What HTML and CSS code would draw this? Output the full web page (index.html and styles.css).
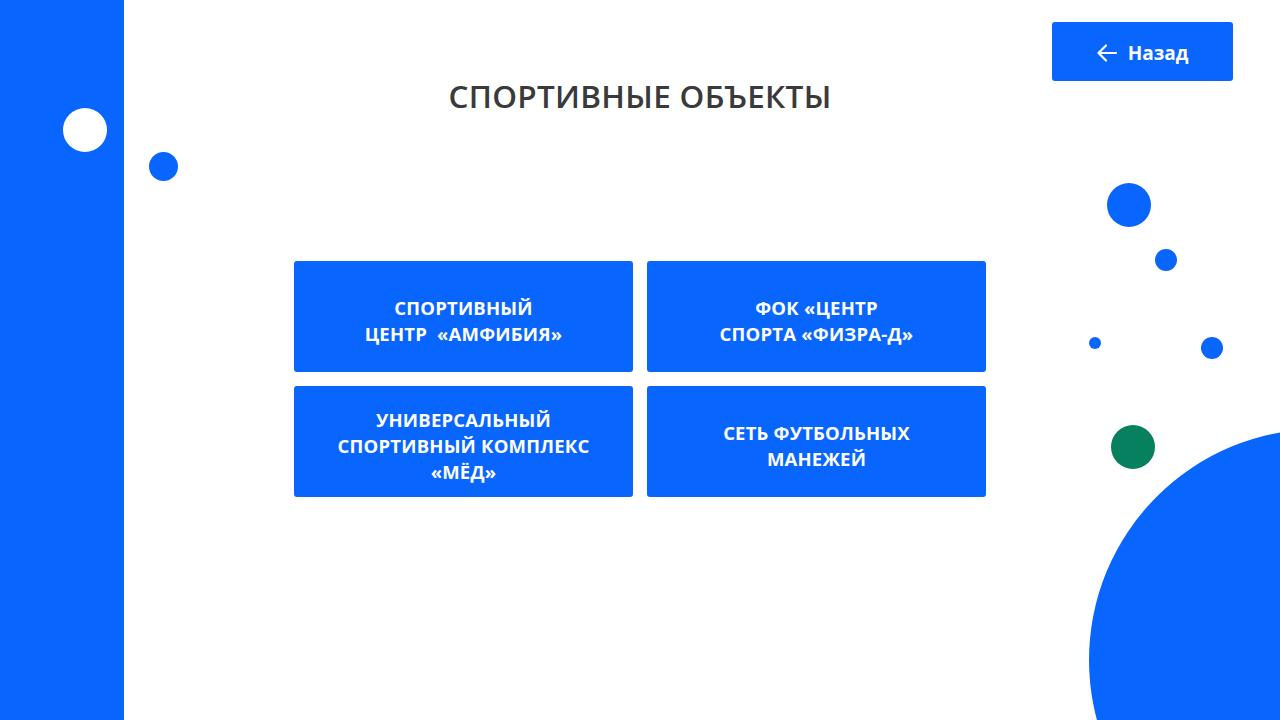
FILE: index.html
```html
<!DOCTYPE html>
<html lang="ru">
<head>
<meta charset="utf-8">
<title>Спортивные объекты</title>
<link rel="stylesheet" href="styles.css">
</head>
<body>
<div class="page">
  <div class="side"></div>
  <span class="dot dot-white"></span>
  <span class="dot dot-left"></span>
  <span class="dot dot-r1"></span>
  <span class="dot dot-r2"></span>
  <span class="dot dot-r3"></span>
  <span class="dot dot-r4"></span>
  <span class="dot dot-green"></span>
  <span class="dot dot-big"></span>

  <a class="back" href="#">
    <svg class="back-icon" viewBox="0 0 24 24" width="24" height="24" aria-hidden="true">
      <path d="M21 12H4M11 4.5L3.5 12 11 19.5" fill="none" stroke="#fff" stroke-width="2.2" stroke-linecap="round" stroke-linejoin="round"/>
    </svg>
    <span>Назад</span>
  </a>

  <main class="content">
    <h1 class="title">СПОРТИВНЫЕ ОБЪЕКТЫ</h1>
    <div class="grid">
      <a class="tile" href="#">СПОРТИВНЫЙ<br>ЦЕНТР&nbsp; «АМФИБИЯ»</a>
      <a class="tile" href="#">ФОК «ЦЕНТР<br>СПОРТА «ФИЗРА-Д»</a>
      <a class="tile" href="#">УНИВЕРСАЛЬНЫЙ<br>СПОРТИВНЫЙ КОМПЛЕКС<br>«МЁД»</a>
      <a class="tile" href="#">СЕТЬ ФУТБОЛЬНЫХ<br>МАНЕЖЕЙ</a>
    </div>
  </main>
</div>
</body>
</html>
```

FILE: styles.css
```css
* { box-sizing: border-box; }
html, body { margin: 0; padding: 0; background: #fff; }
body { font-family: "Open Sans", "Noto Sans", sans-serif; }

.page {
  position: relative;
  width: 1280px;
  height: 720px;
  overflow: hidden;
  background: #fff;
}

.side {
  position: absolute;
  left: 0; top: 0;
  width: 124px;
  height: 100%;
  background: #0866ff;
}

.dot {
  position: absolute;
  border-radius: 50%;
  background: #0866ff;
}
.dot-white { left: 63px; top: 108px; width: 44px; height: 44px; background: #fff; }
.dot-left  { left: 149px; top: 152px; width: 29px; height: 29px; }
.dot-r1    { left: 1107px; top: 183px; width: 44px; height: 44px; }
.dot-r2    { left: 1155px; top: 249px; width: 22px; height: 22px; }
.dot-r3    { left: 1089px; top: 337px; width: 12px; height: 12px; }
.dot-r4    { left: 1201px; top: 337px; width: 22px; height: 22px; }
.dot-green { left: 1111px; top: 425px; width: 44px; height: 44px; background: #07805f; }
.dot-big   { left: 1089px; top: 429px; width: 462px; height: 462px; }

.back {
  position: absolute;
  top: 22px;
  left: 1052px;
  width: 181px;
  height: 59px;
  background: #0866ff;
  border-radius: 3px;
  color: #fff;
  text-decoration: none;
  display: flex;
  align-items: center;
  justify-content: center;
  gap: 9px;
  padding-top: 2px;
  padding-left: 2px;
  font-weight: 700;
  font-size: 19px;
  z-index: 2;
}
.back-icon { display: block; margin-left: -4px; }

.content {
  position: relative;
  z-index: 1;
  display: flex;
  flex-direction: column;
  align-items: center;
  padding-top: 74px;
}

.title {
  margin: 0;
  font-size: 31.5px;
  font-weight: 600;
  color: #3a3a3a;
  line-height: 44px;
  letter-spacing: 0.3px;
}

.grid {
  margin-top: 143px;
  display: grid;
  grid-template-columns: 339px 339px;
  grid-auto-rows: 111px;
  gap: 14px;
}

.tile {
  background: #0866ff;
  border-radius: 3px;
  color: #fff;
  text-decoration: none;
  display: flex;
  align-items: center;
  justify-content: center;
  text-align: center;
  padding-top: 9px;
  font-weight: 700;
  font-size: 18.5px;
  line-height: 26px;
  letter-spacing: 0.2px;
}
```
